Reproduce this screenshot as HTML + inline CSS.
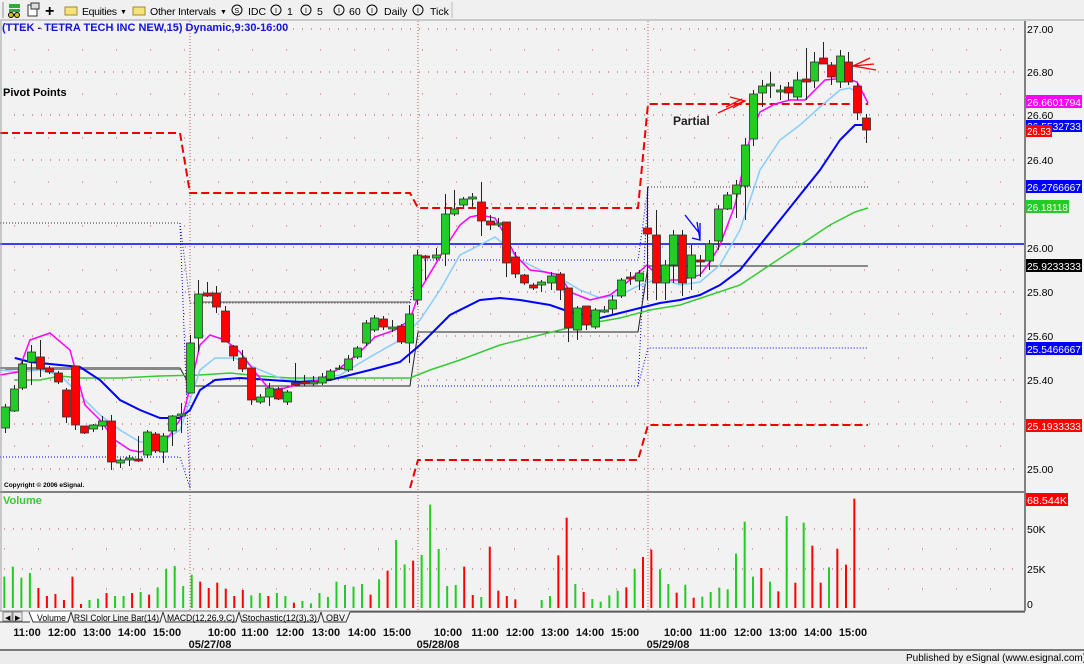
<!DOCTYPE html>
<html><head><meta charset="utf-8">
<style>
html,body{margin:0;padding:0;background:#f0f0f0;width:1084px;height:664px;overflow:hidden;font-family:"Liberation Sans",sans-serif}
svg{position:absolute;left:0;top:0}
</style></head><body>
<svg id="s" width="1084" height="664" xmlns="http://www.w3.org/2000/svg" font-family="Liberation Sans, sans-serif">
<rect width="1084" height="664" fill="#f2f2f2"/>
<rect x="0" y="0" width="1084" height="20" fill="#f0f0f0"/>
<line x1="0" y1="20" x2="1084" y2="20" stroke="#a0a0a0"/>
<rect x="2" y="2" width="2" height="16" fill="#c0c0c0"/>
<rect x="9" y="4" width="11" height="4" fill="#3a3"/><rect x="9" y="9" width="11" height="3" fill="#3a3"/>
<circle cx="11" cy="15" r="2.5" fill="#cc0" stroke="#000"/><circle cx="17" cy="15" r="2.5" fill="#cc0" stroke="#000"/>
<rect x="28" y="5" width="9" height="11" fill="#fff" stroke="#333"/><rect x="31" y="3" width="8" height="6" fill="#ddd" stroke="#333"/>
<text x="45" y="16" font-size="16" font-weight="bold">+</text>
<rect x="65" y="7" width="12" height="8" fill="#f5e27a" stroke="#a08a30"/>
<text x="82" y="15" font-size="10.5" textLength="35">Equities</text><text x="120" y="14" font-size="7">▼</text>
<rect x="133" y="7" width="12" height="8" fill="#f5e27a" stroke="#a08a30"/>
<text x="150" y="15" font-size="10.5" textLength="66">Other Intervals</text><text x="220" y="14" font-size="7">▼</text>
<g font-size="10.5">
<circle cx="237" cy="10" r="5" fill="none" stroke="#000"/><text x="234.5" y="13" font-size="7">S</text><text x="248" y="15">IDC</text>
<circle cx="276" cy="10" r="5" fill="none" stroke="#000"/><text x="275" y="13" font-size="7">I</text><text x="287" y="15">1</text>
<circle cx="306" cy="10" r="5" fill="none" stroke="#000"/><text x="305" y="13" font-size="7">I</text><text x="317" y="15">5</text>
<circle cx="339" cy="10" r="5" fill="none" stroke="#000"/><text x="338" y="13" font-size="7">I</text><text x="349" y="15">60</text>
<circle cx="372" cy="10" r="5" fill="none" stroke="#000"/><text x="371" y="13" font-size="7">I</text><text x="384" y="15">Daily</text>
<circle cx="418" cy="10" r="5" fill="none" stroke="#000"/><text x="417" y="13" font-size="7">I</text><text x="430" y="15">Tick</text>
</g>
<line x1="452" y1="2" x2="452" y2="18" stroke="#bbb"/>
<g id="chart"></g>
<rect x="1025" y="21" width="59" height="590" fill="#f2f2f2"/>
<line x1="1025" y1="21" x2="1025" y2="611" stroke="#808080" stroke-width="2"/>
<line x1="0" y1="492" x2="1025" y2="492" stroke="#808080" stroke-width="2"/>
<line x1="1" y1="21" x2="1" y2="611" stroke="#a0a0a0"/>
<g font-size="10.5" fill="#000">
<text x="1027" y="33">27.00</text>
<text x="1027" y="76">26.80</text>
<rect x="1026" y="95" width="56" height="13" fill="#f0f"/><text x="1027" y="106" fill="#fff" textLength="54" lengthAdjust="spacingAndGlyphs">26.6601794</text>
<text x="1027" y="119">26.60</text>
<rect x="1026" y="120" width="56" height="12" fill="#00f"/><text x="1027" y="130" fill="#fff" textLength="54" lengthAdjust="spacingAndGlyphs">26.5532733</text>
<rect x="1026" y="125" width="26" height="12" fill="#f00"/><text x="1027" y="135" fill="#fff" textLength="24" lengthAdjust="spacingAndGlyphs">26.53</text>
<text x="1027" y="164">26.40</text>
<rect x="1026" y="180" width="56" height="13" fill="#00f"/><text x="1027" y="191" fill="#fff" textLength="54" lengthAdjust="spacingAndGlyphs">26.2766667</text>
<rect x="1026" y="200" width="43" height="13" fill="#2c2"/><text x="1027" y="211" fill="#fff" textLength="41" lengthAdjust="spacingAndGlyphs">26.18118</text>
<text x="1027" y="252">26.00</text>
<rect x="1026" y="259" width="56" height="13" fill="#000"/><text x="1027" y="270" fill="#fff" textLength="54" lengthAdjust="spacingAndGlyphs">25.9233333</text>
<text x="1027" y="296">25.80</text>
<text x="1027" y="340">25.60</text>
<rect x="1026" y="342" width="56" height="13" fill="#00f"/><text x="1027" y="353" fill="#fff" textLength="54" lengthAdjust="spacingAndGlyphs">25.5466667</text>
<text x="1027" y="384">25.40</text>
<rect x="1026" y="419" width="56" height="13" fill="#f00"/><text x="1027" y="430" fill="#fff" textLength="54" lengthAdjust="spacingAndGlyphs">25.1933333</text>
<text x="1027" y="473">25.00</text>
<rect x="1026" y="493" width="42" height="13" fill="#f00"/><text x="1027" y="504" fill="#fff" textLength="40" lengthAdjust="spacingAndGlyphs">68.544K</text>
<text x="1027" y="533">50K</text>
<text x="1027" y="573">25K</text>
<text x="1027" y="608">0</text>
</g>
<text x="2" y="31" font-size="11" font-weight="bold" fill="#1414e0">(TTEK - TETRA TECH INC NEW,15) Dynamic,9:30-16:00</text>
<text x="3" y="96" font-size="11" font-weight="bold">Pivot Points</text>
<text x="673" y="125" font-size="12" font-weight="bold" fill="#222">Partial</text>
<text x="4" y="487" font-size="6.5" font-weight="bold">Copyright © 2006 eSignal.</text>
<text x="3" y="504" font-size="11" font-weight="bold" fill="#3c3">Volume</text>
<g stroke="#f00" stroke-width="1.3" fill="none">
<path d="M718 113 L744 101 M730 97 L745 101 L733 108 M726 107 L742 99"/>
<path d="M853 66 L876 70 M853 66 L870 58 M853 66 L874 64"/>
</g>
<g stroke="#00f" stroke-width="1.3" fill="none"><path d="M685 215 L700 234 M700 223 L700 240 L692 238 M697 222 L700 240"/></g>
<rect x="0" y="611" width="1084" height="53" fill="#f2f2f2"/>
<line x1="0" y1="611" x2="1025" y2="611" stroke="#808080"/>
<rect x="3" y="612" width="9" height="9" fill="#e8e8e8" stroke="#888"/><text x="5" y="620" font-size="7">◀</text>
<rect x="13" y="612" width="9" height="9" fill="#e8e8e8" stroke="#888"/><text x="15" y="620" font-size="7">▶</text>
<g font-size="9.5" fill="#000">
<path d="M29 612 L33 622 L68 622 L71 612" fill="#fff" stroke="#333"/><text x="37" y="621" textLength="29" lengthAdjust="spacingAndGlyphs">Volume</text>
<path d="M71 612 L74 622 L160 622 L163 612" fill="none" stroke="#333"/><text x="74" y="621" textLength="85" lengthAdjust="spacingAndGlyphs">RSI Color Line Bar(14)</text>
<path d="M163 612 L166 622 L236 622 L239 612" fill="none" stroke="#333"/><text x="167" y="621" textLength="68" lengthAdjust="spacingAndGlyphs">MACD(12,26,9,C)</text>
<path d="M239 612 L242 622 L318 622 L321 612" fill="none" stroke="#333"/><text x="242" y="621" textLength="75" lengthAdjust="spacingAndGlyphs">Stochastic(12(3),3)</text>
<path d="M321 612 L324 622 L346 622 L350 612" fill="none" stroke="#333"/><text x="326" y="621" textLength="19" lengthAdjust="spacingAndGlyphs">OBV</text>
<line x1="0" y1="622" x2="30" y2="622" stroke="#333"/><line x1="350" y1="612" x2="1025" y2="612" stroke="#333"/>
</g>
<g font-size="11" font-weight="bold" fill="#111" id="times"></g>
<line x1="0" y1="650" x2="1084" y2="650" stroke="#000"/>
<rect x="0" y="651" width="1084" height="13" fill="#ececec"/>
<text x="906" y="661" font-size="10">Published by eSignal (www.esignal.com)</text>
</svg>
<script>
var NS="http://www.w3.org/2000/svg",g=document.getElementById('chart');
function el(t,a,p){var e=document.createElementNS(NS,t);for(var k in a)e.setAttribute(k,a[k]);(p||g).appendChild(e);return e;}
[29,72,115,160,204,247,292,336,380,424,469].forEach(function(y){el('line',{x1:14,y1:y,x2:1020,y2:y,stroke:'#900','stroke-dasharray':'1 8',opacity:.7});});
[50,94,138,182,226,270,314,358,402,446].forEach(function(y){el('line',{x1:14,y1:y,x2:1020,y2:y,stroke:'#900','stroke-dasharray':'1 33',opacity:.6});});
[529,569].forEach(function(y){el('line',{x1:4,y1:y,x2:1020,y2:y,stroke:'#900','stroke-dasharray':'1 8',opacity:.7});});
[549,589].forEach(function(y){el('line',{x1:4,y1:y,x2:1020,y2:y,stroke:'#900','stroke-dasharray':'1 33',opacity:.6});});
[190,418,648].forEach(function(x){el('line',{x1:x,y1:21,x2:x,y2:610,stroke:'#a33','stroke-dasharray':'1 2',opacity:.8});});
function pl(d,c,w,da){el('path',{d:d,stroke:c,'stroke-width':w,fill:'none','stroke-dasharray':da||''});}
pl('M0 133 L180 133 L190 193 L410 193 L418 208 L638 208 L648 104 L868 104','#e00',2,'8 4');
pl('M410 488 L418 460 L638 460 L648 425 L868 425','#e00',2,'8 4');
pl('M0 223 L180 223 L190 303 L410 303','#333',1,'1 2');
pl('M0 457 L180 457 L190 488','#00f',1,'1 2');
pl('M418 260 L638 260 L648 187','#00f',1,'1 2');
pl('M648 187 L868 187','#333',1,'1 2');
pl('M180 223 L190 488','#00f',1,'1 2');
pl('M410 303 L418 260','#00f',1,'1 2');
pl('M418 386 L638 386 L648 348 L868 348','#00f',1,'1 2');
pl('M638 386 L648 187','#00f',1,'1 2');
pl('M0 368 L180 368 L190 386 L410 386 L418 332 L638 332 L648 266 L868 266','#222',1);
pl('M5 369 L180 369','#888',2);
pl('M195 302 L410 302','#555',1);
pl('M0 244 L1025 244','#00f',1.5);
function ma(pts,c,w){el('polyline',{points:pts,stroke:c,'stroke-width':w,fill:'none'});}
ma('15,380 40,380 60,376 80,378 120,378 160,376 200,375 230,373 260,376 290,378 410,378 430,370 460,360 500,345 540,335 580,325 620,318 650,310 680,305 710,295 740,285 770,265 800,245 830,225 855,212 868,208','#3c3',1.5);
ma('0,370 20,372 40,370 60,375 80,395 100,415 120,430 140,442 165,440 180,430 190,400 200,370 215,358 235,358 260,370 285,380 310,380 340,375 370,357 400,340 420,320 440,290 460,255 480,245 495,237 505,245 520,260 540,270 560,278 580,290 600,298 620,295 640,285 660,278 680,285 700,282 720,265 740,230 760,170 780,140 800,125 820,107 840,90 850,88 860,95','#8cf',1.5);
ma('15,358 30,362 60,365 80,367 100,380 120,400 140,410 160,418 180,418 190,410 200,390 215,380 240,378 300,382 330,380 370,370 400,362 420,345 450,315 480,300 500,298 520,300 550,305 570,312 600,318 620,313 640,308 660,303 680,300 700,295 720,285 740,270 760,245 780,220 800,195 820,170 840,140 855,125 868,125','#00f',2);
ma('0,375 18,372 30,340 50,333 70,350 85,405 100,420 115,440 130,450 140,452 155,448 170,435 183,415 192,380 200,345 210,335 225,340 240,352 255,372 270,390 285,388 300,384 320,380 340,368 360,352 375,337 395,330 410,320 420,290 435,265 450,240 460,225 470,217 480,215 495,218 505,235 515,255 530,270 545,272 560,275 570,292 590,300 610,295 630,280 647,265 652,270 665,280 680,280 700,275 710,262 720,245 735,205 745,160 752,130 760,112 775,104 790,100 805,100 815,90 825,80 845,78 857,82 868,103','#f0f',1.5);
var C=[[5,407,428,404,433,'g'],[14,389,411,385,412,'g'],[22,364,388,360,390,'g'],[31,352,362,345,385,'g'],[40,357,369,340,377,'r'],[49,368,372,366,374,'r'],[58,373,382,371,384,'r'],[66,390,417,388,423,'r'],[75,366,425,366,430,'r'],[84,426,433,426,434,'r'],[93,425,429,424,432,'g'],[102,421,426,416,430,'g'],[111,421,462,415,470,'r'],[120,460,463,458,468,'g'],[129,458,460,455,466,'g'],[138,459,461,436,462,'r'],[147,432,455,430,458,'g'],[155,434,451,432,453,'r'],[163,436,452,433,463,'g'],[172,416,431,415,446,'g'],[181,414,416,403,433,'g'],[190,343,393,335,393,'g'],[198,294,338,280,352,'g'],[207,293,296,282,297,'r'],[216,293,307,286,313,'r'],[225,311,342,306,342,'r'],[233,346,356,345,361,'r'],[242,358,369,350,372,'r'],[251,368,400,368,405,'r'],[260,397,402,394,404,'g'],[269,388,397,383,406,'g'],[278,389,399,387,400,'r'],[287,392,402,390,405,'g'],[295,383,385,363,386,'r'],[304,382,384,375,386,'r'],[313,382,384,376,386,'g'],[322,377,383,373,385,'g'],[330,371,379,369,381,'g'],[339,368,369,365,370,'g'],[348,359,370,355,372,'g'],[357,348,357,346,359,'g'],[366,323,343,320,346,'g'],[374,318,330,315,332,'g'],[383,319,327,316,330,'r'],[392,327,329,320,332,'g'],[401,326,342,324,344,'r'],[409,314,343,305,363,'g'],[417,255,300,250,305,'g'],[425,256,258,255,280,'r'],[436,255,258,248,260,'g'],[445,214,254,194,266,'g'],[454,209,214,190,216,'g'],[463,199,205,197,207,'g'],[472,197,199,193,207,'g'],[481,202,221,182,236,'r'],[490,221,225,215,230,'r'],[498,223,225,218,227,'g'],[506,222,263,222,277,'r'],[515,257,274,252,278,'r'],[524,275,283,274,285,'r'],[533,285,288,283,290,'r'],[541,282,285,280,292,'g'],[551,276,283,272,290,'g'],[560,274,290,272,300,'r'],[568,288,328,288,342,'r'],[577,308,330,306,340,'g'],[586,306,325,306,330,'r'],[595,310,327,308,329,'g'],[604,310,312,306,313,'g'],[612,300,309,295,314,'g'],[621,280,296,278,298,'g'],[630,277,279,272,285,'r'],[639,273,281,270,290,'g'],[647,228,234,187,300,'r'],[656,235,283,210,300,'r'],[665,265,283,260,300,'g'],[673,235,265,230,283,'g'],[682,235,283,230,296,'r'],[691,255,278,245,290,'g'],[700,260,262,255,277,'r'],[709,244,261,240,270,'g'],[718,209,241,205,250,'g'],[727,195,209,192,210,'g'],[736,185,194,180,218,'g'],[745,145,186,138,220,'g'],[753,94,139,90,146,'g'],[762,86,93,80,107,'g'],[770,84,86,72,98,'g'],[780,90,92,85,100,'g'],[788,87,93,82,100,'r'],[797,80,97,72,100,'g'],[806,79,82,48,100,'r'],[814,62,81,52,88,'g'],[823,58,64,42,64,'r'],[831,65,77,62,85,'r'],[840,56,82,50,88,'g'],[848,62,82,52,85,'r'],[857,86,113,83,120,'r'],[866,118,130,114,143,'r']];
C.forEach(function(c){var x=c[0];el('line',{x1:x+.5,y1:c[3],x2:x+.5,y2:c[4],stroke:'#222'});
el('rect',{x:x-3.5,y:c[1],width:8,height:Math.max(1,c[2]-c[1]),fill:c[5]=='g'?'#2c2':'#f00',stroke:'#333','stroke-width':.8});});
var V1=[290,'g',260,'g',293,'g',279,'g',324,'r',348,'r',342,'r',360,'r',290,'r',372,'r',360,'g',356,'g',339,'r',348,'g',348,'g',339,'r',336,'g',344,'r',322,'g',267,'g',258,'g',318,'g',284,'g',305,'r',324,'r',308,'r',326,'r',348,'r',330,'r',346,'g',339,'g',348,'r',339,'g',348,'g',368,'r',363,'g',370,'g',339,'g',351,'g',305,'g',315,'g',320,'g',312,'g',344,'r',298,'g',272,'r',180,'g',253,'g',242,'r',225,'g',74,'g',207,'g',318,'g',315,'g',260,'r',345,'r',351,'g',200,'r',332,'r',348,'r',358,'r'];
for(var i=0;i<V1.length/2;i++){var x=(13+i*25.55)/3;el('rect',{x:x-1,y:V1[2*i]/3+480,width:2,height:608-(V1[2*i]/3+480),fill:V1[2*i+1]=='g'?'#2c2':'#f00'});}
var V2=[5,'g',360,30,'g',348,55,'r',226,80,'r',113,106,'g',312,131,'r',336,157,'g',357,182,'g',365,208,'g',346,233,'g',332,259,'r',322,284,'g',267,309,'r',231,334,'r',209,360,'g',268,385,'g',312,410,'r',338,436,'g',314,461,'r',353,487,'g',350,512,'g',336,538,'g',323,563,'g',328,588,'g',221,614,'g',125,639,'g',290,664,'r',264,690,'g',305,715,'r',334,740,'g',108,766,'r',308,791,'g',128,817,'r',197,842,'r',308,867,'g',262,892,'r',206,918,'r',254,943,'r',56];
for(var i=0;i<V2.length;i+=3){var x=V2[i]/3+540,y=V2[i+2]/3+480;el('rect',{x:x-1,y:y,width:2,height:608-y,fill:V2[i+1]=='g'?'#2c2':'#f00'});}
var tg=document.getElementById('times');
[[27,'11:00'],[62,'12:00'],[97,'13:00'],[132,'14:00'],[167,'15:00'],[222,'10:00'],[255,'11:00'],[290,'12:00'],[326,'13:00'],[362,'14:00'],[397,'15:00'],[448,'10:00'],[485,'11:00'],[520,'12:00'],[555,'13:00'],[590,'14:00'],[625,'15:00'],[678,'10:00'],[713,'11:00'],[748,'12:00'],[783,'13:00'],[818,'14:00'],[853,'15:00']].forEach(function(t){var e=el('text',{x:t[0],y:636,'text-anchor':'middle'},tg);e.textContent=t[1];});
[[210,'05/27/08'],[438,'05/28/08'],[668,'05/29/08']].forEach(function(t){var e=el('text',{x:t[0],y:648,'text-anchor':'middle'},tg);e.textContent=t[1];});
</script>
</body></html>
